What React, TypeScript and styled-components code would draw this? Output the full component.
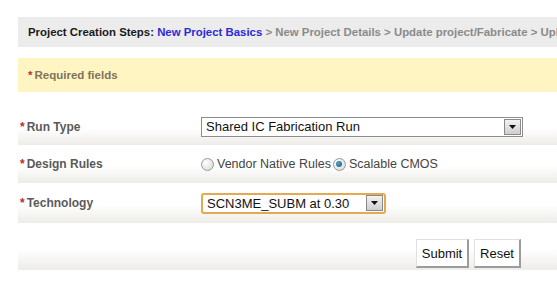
import styled, { createGlobalStyle } from 'styled-components';

const GlobalStyle = createGlobalStyle`
  html, body {
    margin: 0;
    padding: 0;
    background: #ffffff;
    overflow: hidden;
  }
  body {
    font-family: 'Liberation Sans', Arial, sans-serif;
  }
`;

const Page = styled.div`
  width: 720px;
  padding: 17px 0 0 18px;
`;

const StepBar = styled.div`
  height: 30px;
  line-height: 30px;
  padding-left: 10px;
  background: #ececec;
  white-space: nowrap;
  font-size: 11.4px;
  font-weight: bold;
  color: #8a8a8a;
`;

const StepTitle = styled.span`
  color: #1a1a1a;
`;

const StepCurrent = styled.span`
  color: #2b2bd6;
`;

const Notice = styled.div`
  margin-top: 11px;
  height: 34px;
  line-height: 34px;
  padding-left: 10px;
  background: #fff5c2;
  font-size: 11.5px;
  font-weight: bold;
  color: #80735a;
`;

const Star = styled.span`
  color: #c0282d;
  margin-right: 2px;
`;

const Form = styled.div`
  margin-top: 16px;
`;

const Row = styled.div<{ $h?: number; $end?: boolean }>`
  display: grid;
  grid-template-columns: 183px 1fr;
  align-items: ${(p) => (p.$end ? 'end' : 'center')};
  box-sizing: border-box;
  height: ${(p) => p.$h ?? 37}px;
  padding-bottom: ${(p) => (p.$end ? 2 : 0)}px;
  background: linear-gradient(to bottom, #ffffff 0%, #ffffff 55%, #edece8 100%);
`;

const Label = styled.div`
  padding-left: 2px;
  font-size: 12px;
  font-weight: bold;
  color: #5a5a5a;
`;

const Field = styled.div`
  display: flex;
  align-items: center;
  font-size: 12.5px;
  color: #222;
`;

const SelectBox = styled.div<{ $w: number; $focus?: boolean }>`
  box-sizing: border-box;
  width: ${(p) => p.$w}px;
  height: ${(p) => (p.$focus ? 21 : 20)}px;
  display: flex;
  align-items: center;
  justify-content: space-between;
  padding: 0 1px 0 4px;
  background: #fff;
  border: ${(p) => (p.$focus ? '2px solid #e6a850' : '1px solid #8c8c8c')};
  border-radius: ${(p) => (p.$focus ? 3 : 0)}px;
  font-size: 13px;
  color: #111;
`;

const Arrow = styled.div`
  box-sizing: border-box;
  width: 17px;
  height: 16px;
  display: flex;
  align-items: center;
  justify-content: center;
  border: 1px solid #8a8a8a;
  background: linear-gradient(to bottom, #f2f2f2, #cfcfcf);
`;

const Radio = styled.span<{ $on?: boolean }>`
  box-sizing: border-box;
  display: inline-flex;
  align-items: center;
  justify-content: center;
  width: 13px;
  height: 13px;
  margin-right: 3px;
  border-radius: 50%;
  border: 1px solid #9a9a9a;
  background: radial-gradient(circle at 35% 35%, #ffffff, #d4d4d4);
  &::after {
    content: '';
    display: ${(p) => (p.$on ? 'block' : 'none')};
    width: 6px;
    height: 6px;
    border-radius: 50%;
    background: radial-gradient(circle at 35% 35%, #4fa3c2, #1b5a74);
  }
`;

const RadioText = styled.span`
  margin-right: 2px;
  color: #444;
`;

const Buttons = styled.div`
  width: 320px;
  display: flex;
  justify-content: flex-end;
  gap: 5px;
`;

const Button = styled.button<{ $w: number }>`
  box-sizing: border-box;
  width: ${(p) => p.$w}px;
  height: 29px;
  padding: 0;
  background: #ffffff;
  border: 1px solid #e0e0e0;
  border-right: 2px solid #9c9c9c;
  border-bottom: 2px solid #9c9c9c;
  font-family: 'Liberation Sans', Arial, sans-serif;
  font-size: 13px;
  color: #111;
`;

const DownArrow = () => (
  <Arrow>
    <svg width="7" height="4" viewBox="0 0 7 4">
      <path d="M0 0H7L3.5 4Z" fill="#111" />
    </svg>
  </Arrow>
);

export default function App() {
  return (
    <>
      <GlobalStyle />
      <Page>
        <StepBar>
          <StepTitle>Project Creation Steps: </StepTitle>
          <StepCurrent>New Project Basics</StepCurrent> &gt; New Project Details &gt; Update
          project/Fabricate &gt; Upload Design Files
        </StepBar>
        <Notice>
          <Star>*</Star>Required fields
        </Notice>
        <Form>
          <Row $h={37}>
            <Label>
              <Star>*</Star>Run Type
            </Label>
            <Field>
              <SelectBox $w={322}>
                Shared IC Fabrication Run
                <DownArrow />
              </SelectBox>
            </Field>
          </Row>
          <Row $h={38}>
            <Label>
              <Star>*</Star>Design Rules
            </Label>
            <Field>
              <Radio />
              <RadioText>Vendor Native Rules</RadioText>
              <Radio $on />
              <RadioText>Scalable CMOS</RadioText>
            </Field>
          </Row>
          <Row $h={40}>
            <Label>
              <Star>*</Star>Technology
            </Label>
            <Field>
              <SelectBox $w={185} $focus>
                SCN3ME_SUBM at 0.30
                <DownArrow />
              </SelectBox>
            </Field>
          </Row>
          <Row $h={47} $end>
            <div />
            <Buttons>
              <Button $w={53}>Submit</Button>
              <Button $w={47}>Reset</Button>
            </Buttons>
          </Row>
        </Form>
      </Page>
    </>
  );
}
